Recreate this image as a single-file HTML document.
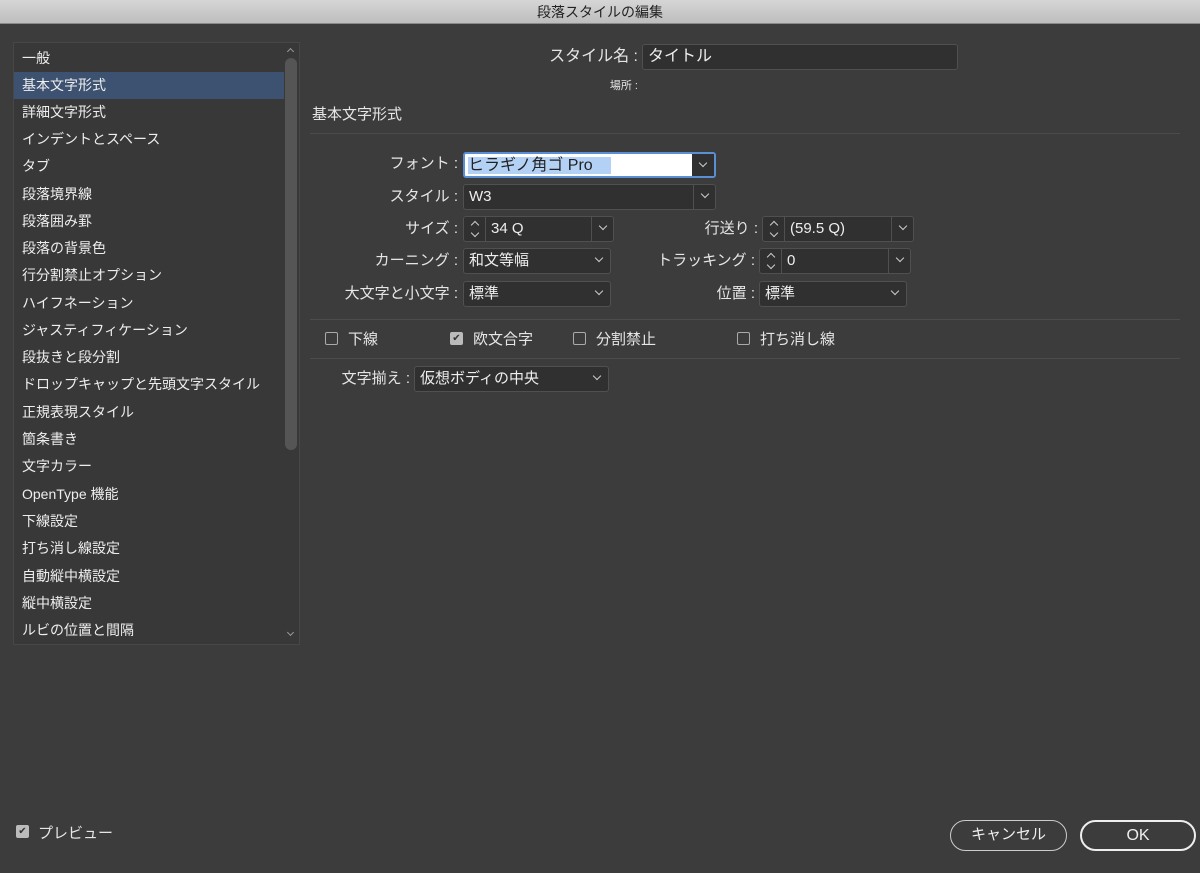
<!DOCTYPE html>
<html><head><meta charset="utf-8"><style>
*{box-sizing:border-box;margin:0;padding:0}
body{width:1200px;height:873px;background:#3c3c3c;font-family:"Liberation Sans","Noto Sans CJK JP",sans-serif;color:#e6e6e6;position:relative;overflow:hidden;font-size:14px}
.abs{position:absolute}
.title{left:0;top:0;width:1200px;height:24px;background:linear-gradient(#d6d6d6,#bdbdbd);border-bottom:1px solid #8a8a8a;color:#222;text-align:center;font-size:14px;line-height:24px}
.list{left:13px;top:42px;width:287px;height:603px;background:#383838;border:1px solid #474747}
.item{position:absolute;left:0;width:270px;height:27px;line-height:27px;padding-left:8px;font-size:14px;color:#eee}
.sel{background:#3d5270}
.sb{left:285px;top:58px;width:12px;height:392px;background:#555;border-radius:6px}
.fld{position:absolute;background:#303030;border:1px solid #505050;border-radius:3px;height:26px;line-height:24px;padding-left:5px;font-size:15px;color:#eee}
.lbl{position:absolute;font-size:15px;text-align:right;line-height:26px;color:#e6e6e6}
.dd{position:absolute;right:0;top:0;height:24px;width:22px;border-left:1px solid #505050;text-align:center}
.chev{position:absolute;width:6px;height:6px;border-right:1.5px solid #ccc;border-bottom:1.5px solid #ccc;transform:rotate(45deg)}
.spin{position:absolute;left:0;top:0;width:22px;height:24px;border-right:1px solid #505050}
.spin:before,.spin:after{content:"";position:absolute;left:8px;width:5px;height:5px;border-right:1.3px solid #ccc;border-bottom:1.3px solid #ccc}
.spin:before{top:5px;transform:rotate(225deg)}
.spin:after{top:13px;transform:rotate(45deg)}
.cb{position:absolute;width:13px;height:13px;border:1px solid #aaa;border-radius:2px}
.hr{position:absolute;height:1px;background:#4c4c4c}
.btn{position:absolute;border-radius:16px;text-align:center;font-size:15px;line-height:28px;color:#eee}
</style></head><body>
<div class="abs title">段落スタイルの編集</div>
<div class="abs list">
<div class="item" style="top:2px">一般</div>
<div class="item sel" style="top:29px">基本文字形式</div>
<div class="item" style="top:56px">詳細文字形式</div>
<div class="item" style="top:83px">インデントとスペース</div>
<div class="item" style="top:110px">タブ</div>
<div class="item" style="top:138px">段落境界線</div>
<div class="item" style="top:165px">段落囲み罫</div>
<div class="item" style="top:192px">段落の背景色</div>
<div class="item" style="top:219px">行分割禁止オプション</div>
<div class="item" style="top:247px">ハイフネーション</div>
<div class="item" style="top:274px">ジャスティフィケーション</div>
<div class="item" style="top:301px">段抜きと段分割</div>
<div class="item" style="top:328px">ドロップキャップと先頭文字スタイル</div>
<div class="item" style="top:356px">正規表現スタイル</div>
<div class="item" style="top:383px">箇条書き</div>
<div class="item" style="top:410px">文字カラー</div>
<div class="item" style="top:438px">OpenType 機能</div>
<div class="item" style="top:465px">下線設定</div>
<div class="item" style="top:492px">打ち消し線設定</div>
<div class="item" style="top:520px">自動縦中横設定</div>
<div class="item" style="top:547px">縦中横設定</div>
<div class="item" style="top:574px">ルビの位置と間隔</div>
</div>
<div class="abs sb"></div>
<div class="chev" style="left:288px;top:49px;transform:rotate(225deg);width:5px;height:5px;border-color:#999"></div>
<div class="chev" style="left:288px;top:630px;width:5px;height:5px;border-color:#999"></div>

<div class="lbl" style="left:500px;width:138px;top:44px;font-size:16px">スタイル名 :</div>
<div class="fld" style="left:642px;top:44px;width:316px;font-size:16px">タイトル</div>
<div class="lbl" style="left:560px;width:78px;top:73px;font-size:11px">場所 :</div>
<div class="abs" style="left:312px;top:103px;font-size:15px">基本文字形式</div>
<div class="hr" style="left:310px;top:133px;width:870px"></div>

<div class="lbl" style="left:300px;width:158px;top:151px">フォント :</div>
<div class="fld" style="left:463px;top:152px;width:253px;background:#fff;border:2px solid #5a8fd6;padding-left:3px;color:#222;font-size:16px"><span style="background:#b3d1f5">ヒラギノ角ゴ Pro&nbsp;&nbsp;&nbsp;&nbsp;</span><div class="dd" style="background:#303030;height:22px;border:none"><div class="chev" style="left:8px;top:6px"></div></div></div>
<div class="lbl" style="left:300px;width:158px;top:184px">スタイル :</div>
<div class="fld" style="left:463px;top:184px;width:253px">W3<div class="dd"><div class="chev" style="left:8px;top:6px"></div></div></div>

<div class="lbl" style="left:300px;width:158px;top:216px">サイズ :</div>
<div class="fld" style="left:463px;top:216px;width:151px;padding-left:27px">34 Q<div class="spin"></div><div class="dd"><div class="chev" style="left:8px;top:6px"></div></div></div>
<div class="lbl" style="left:620px;width:138px;top:216px">行送り :</div>
<div class="fld" style="left:762px;top:216px;width:152px;padding-left:27px">(59.5 Q)<div class="spin"></div><div class="dd"><div class="chev" style="left:8px;top:6px"></div></div></div>

<div class="lbl" style="left:300px;width:158px;top:248px">カーニング :</div>
<div class="fld" style="left:463px;top:248px;width:148px">和文等幅<div class="dd" style="border:none"><div class="chev" style="left:8px;top:6px"></div></div></div>
<div class="lbl" style="left:600px;width:155px;top:248px">トラッキング :</div>
<div class="fld" style="left:759px;top:248px;width:152px;padding-left:27px">0<div class="spin"></div><div class="dd"><div class="chev" style="left:8px;top:6px"></div></div></div>

<div class="lbl" style="left:300px;width:158px;top:281px">大文字と小文字 :</div>
<div class="fld" style="left:463px;top:281px;width:148px">標準<div class="dd" style="border:none"><div class="chev" style="left:8px;top:6px"></div></div></div>
<div class="lbl" style="left:620px;width:135px;top:281px">位置 :</div>
<div class="fld" style="left:759px;top:281px;width:148px">標準<div class="dd" style="border:none"><div class="chev" style="left:8px;top:6px"></div></div></div>

<div class="hr" style="left:310px;top:319px;width:870px"></div>
<div class="cb" style="left:325px;top:332px"></div><div class="abs" style="left:348px;top:328px;font-size:15px">下線</div>
<div class="cb" style="left:450px;top:332px;background:#bbb;border-color:#bbb;color:#333;font-size:10px;line-height:11px;text-align:center">✔</div><div class="abs" style="left:473px;top:328px;font-size:15px">欧文合字</div>
<div class="cb" style="left:573px;top:332px"></div><div class="abs" style="left:596px;top:328px;font-size:15px">分割禁止</div>
<div class="cb" style="left:737px;top:332px"></div><div class="abs" style="left:760px;top:328px;font-size:15px">打ち消し線</div>
<div class="hr" style="left:310px;top:358px;width:870px"></div>

<div class="lbl" style="left:300px;width:110px;top:366px">文字揃え :</div>
<div class="fld" style="left:414px;top:366px;width:195px">仮想ボディの中央<div class="dd" style="border:none"><div class="chev" style="left:8px;top:6px"></div></div></div>

<div class="cb" style="left:16px;top:825px;background:#bbb;border-color:#bbb;color:#333;font-size:10px;line-height:11px;text-align:center">✔</div>
<div class="abs" style="left:38px;top:822px;font-size:15px">プレビュー</div>
<div class="btn" style="left:950px;top:820px;width:117px;height:31px;border:1.5px solid #ccc">キャンセル</div>
<div class="btn" style="left:1080px;top:820px;width:116px;height:31px;border:2.5px solid #eee;font-size:16px">OK</div>
</body></html>
